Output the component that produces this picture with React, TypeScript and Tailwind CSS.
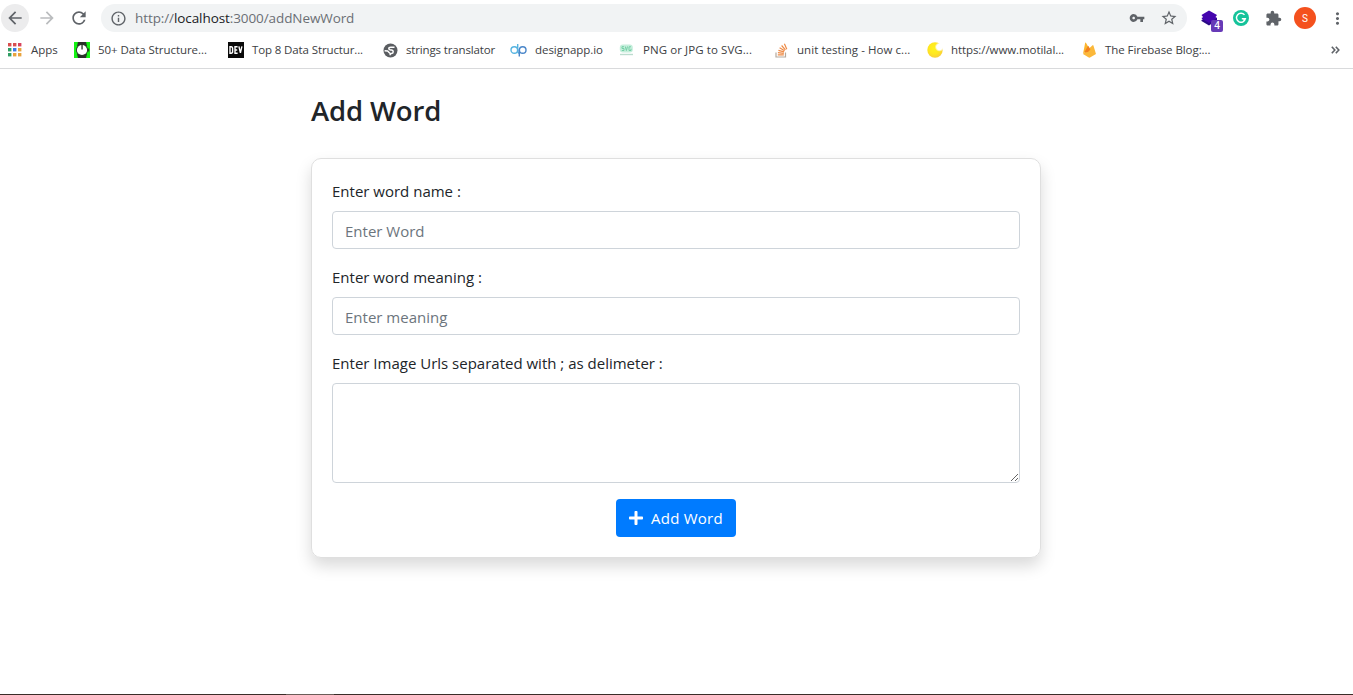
import type { ReactNode } from "react";
import { MdArrowBack, MdArrowForward, MdExtension, MdInfoOutline, MdMoreVert, MdRefresh, MdStarBorder, MdVpnKey } from "react-icons/md";
import { FaPlus } from "react-icons/fa";

const appColors = ["#d94f4f", "#d94f4f", "#d8445c", "#2f9e63", "#3b78e7", "#e8a33d", "#2f9e63", "#e8a33d", "#e8a33d"];

function AppsIcon() {
  return (
    <svg width="14" height="14" viewBox="0 0 14 14">
      {appColors.map((c, i) => (
        <rect key={i} x={(i % 3) * 5} y={Math.floor(i / 3) * 5} width="3.4" height="3.4" fill={c} />
      ))}
    </svg>
  );
}

function ClockIcon() {
  return (
    <svg width="16" height="16" viewBox="0 0 16 16">
      <rect width="16" height="16" fill="#12f312" />
      <path d="M4 0h8l1 4H3zM4 16h8l1-4H3z" fill="#2b2f2b" />
      <circle cx="8" cy="8" r="6" fill="#2b3a2b" />
      <circle cx="8" cy="8" r="5.100" fill="#fff" />
      <rect x="7.400" y="3" width="1.300" height="4.500" fill="#2b2f2b" />
      <rect x="14" y="6.500" width="1.200" height="3" fill="#2b3a2b" />
    </svg>
  );
}

function DevIcon() {
  return (
    <span className="flex h-4 w-4 items-center justify-center bg-[#0a0a0a]">
      <svg width="14" height="8" viewBox="0 0 14 8" fill="none" stroke="#fff" strokeWidth="1.400">
        <path d="M1 .8v6.400h1.200q1.400 0 1.400-1.400V2.200Q3.600.8 2.200.8zM8.600.8H6v6.400h2.600M6 4h2.200M9.900.3l1.500 6.500L12.900.3" />
      </svg>
    </span>
  );
}

function GlobeIcon() {
  return (
    <svg width="15" height="15" viewBox="0 0 15 15">
      <circle cx="7.500" cy="7.500" r="7" fill="#5a5d61" />
      <path d="M11.500 4.300H7.800Q5.800 4.300 5.800 5.600T7.600 7H8.600Q10.200 7.200 10.200 8.800T8.600 10.600H7.200V12.300M1.600 7.800 4.600 8 6.600 10" fill="none" stroke="#fff" strokeWidth="1.500" />
    </svg>
  );
}

function DpIcon() {
  return (
    <svg width="17" height="14" viewBox="0 0 17 14" fill="none" strokeWidth="1.400">
      <circle cx="4.300" cy="7" r="3.300" stroke="#56b4e0" />
      <path d="M7.700 1v6.500q0 2.800 1.800 2.800" stroke="#56b4e0" />
      <circle cx="12.700" cy="7" r="3.300" stroke="#4a86c9" />
      <path d="M9.300 6.500V13.500" stroke="#4a86c9" />
    </svg>
  );
}

function SvgFileIcon() {
  return (
    <svg width="15" height="12" viewBox="0 0 15 12" fill="none">
      <rect x=".8" y=".5" width="13" height="8" rx="3" fill="#c6eedc" />
      <path d="M5 2.700H3v1.800h2v2H2.800M6.300 2.500l1.100 4 1.100-4M12 2.800h-2v3.700h2V4.800" stroke="#74d0a6" />
      <path d="M1 10.500h13" stroke="#bcdccf" strokeWidth="1.400" />
    </svg>
  );
}

function StackIcon() {
  return (
    <svg width="13" height="15" viewBox="0 0 13 15" fill="none">
      <path d="M1 9.500v4.500h9.500V9.500" stroke="#b4a99d" strokeWidth="1.200" />
      <path d="M2.800 11.900h6M2.900 9.700l5.900.6M3.400 7.300l5.700 1.500M4.600 4.700l5 3M6.600 2.500l3.800 4.400M9.400.8l2.400 5.400" stroke="#ee8a45" strokeWidth="1.200" />
    </svg>
  );
}

function MoonIcon() {
  return (
    <svg width="16" height="16" viewBox="0 0 16 16">
      <defs>
        <radialGradient id="moon" cx=".45" cy=".4" r=".6">
          <stop offset="0" stopColor="#fff21f" />
          <stop offset=".6" stopColor="#ffe81f" />
          <stop offset="1" stopColor="#f9cf3a" />
        </radialGradient>
        <radialGradient id="shine">
          <stop offset=".6" stopColor="#fff" />
          <stop offset="1" stopColor="#fff" stopOpacity="0" />
        </radialGradient>
      </defs>
      <circle cx="8" cy="8" r="7.700" fill="url(#moon)" />
      <circle cx="12.500" cy="5" r="4.800" fill="url(#shine)" />
    </svg>
  );
}

function FirebaseIcon() {
  return (
    <svg width="13" height="16" viewBox="0 0 13 16">
      <path d="M0 12 2.200.8q.2-.7.700 0L6 6z" fill="#fbb52c" />
      <path d="M0 12 9.600 3.200q.6-.4.800.3L13 12 7 15.500q-.6.300-1.200 0z" fill="#fbb83a" />
      <path d="M1.200 10.500 4.800 4.200q.4-.6.800 0L7.400 7.600 5 10z" fill="#f2801e" />
    </svg>
  );
}

function StackedCubeIcon() {
  return (
    <svg width="17" height="17" viewBox="0 0 17 17">
      <path d="M.5 7.500 8 12l8-4.500V10L8 15.500.500 11V10L2 9.200z" fill="#2b0a86" />
      <path d="M8 .5 16 5 14.500 7 16 8.200 8 13 .5 8.500 2 7 .500 5z" fill="#4505ae" />
    </svg>
  );
}

function GrammarlyIcon() {
  return (
    <svg width="16" height="16" viewBox="0 0 16 16">
      <circle cx="8" cy="8" r="8" fill="#15c39a" />
      <path d="M11.500 4.900A4.500 4.500 0 1 0 12.400 8.700H8.800M10.600 10.500l1.800-1.800" fill="none" stroke="#fff" strokeWidth="1.400" />
    </svg>
  );
}

function Bookmark({ icon, label, className, iconBox }: { icon: ReactNode; label: string; className: string; iconBox: string }) {
  return (
    <div className={`flex h-5 shrink-0 items-center whitespace-nowrap text-[11.5px] text-[#3c4043] ${className}`}>
      <span className={`flex shrink-0 items-center ${iconBox}`}>{icon}</span>
      <span>{label}</span>
    </div>
  );
}

function Toolbar() {
  return (
    <div className="flex h-9 items-center text-[#5f6368]">
      <button className="ml-px flex h-7 w-7 items-center justify-center rounded-full bg-[#ececed]">
        <MdArrowBack size={20} />
      </button>
      <button className="ml-2 flex h-7 w-5 items-center justify-center text-[#babcbe]">
        <MdArrowForward size={20} />
      </button>
      <button className="ml-3 flex h-7 w-5 items-center justify-center">
        <MdRefresh size={20} />
      </button>
      <div className="ml-3 flex h-7 w-[1086px] items-center rounded-full bg-[#f1f3f4] px-[9px]">
        <MdInfoOutline size={17} />
        <span className="ml-2 flex-1 text-[13.5px] tracking-[-0.09px] text-[#6b6f74]">
          http://<span className="text-[#202124]">localhost</span>:3000/addNewWord
        </span>
        <MdVpnKey size={16} />
        <MdStarBorder size={18} className="ml-[15px]" />
      </div>
      <div className="relative ml-[14px] h-[17px] w-[17px]">
        <StackedCubeIcon />
        <span className="absolute top-[10px] left-[10px] flex h-3 w-3 items-center justify-center rounded-[2px] bg-[#673ab7] text-[10px] font-semibold text-white">4</span>
      </div>
      <div className="ml-[15px]"><GrammarlyIcon /></div>
      <MdExtension size={17} className="ml-4" />
      <div className="ml-3 flex h-[22px] w-[22px] items-center justify-center rounded-full bg-[#f4511e] font-['Roboto',sans-serif] text-[10px] text-white">S</div>
      <MdMoreVert size={19} className="ml-3" />
    </div>
  );
}

function BookmarksBar() {
  return (
    <div className="flex h-7 items-center">
      <Bookmark className="w-[66px] pl-2" iconBox="w-[23px]" icon={<AppsIcon />} label="Apps" />
      <Bookmark className="w-[154px] pl-2 tracking-[-0.05px]" iconBox="w-6" icon={<ClockIcon />} label="50+ Data Structure..." />
      <Bookmark className="w-[154px] pl-2 tracking-[-0.12px]" iconBox="w-6" icon={<DevIcon />} label="Top 8 Data Structur..." />
      <Bookmark className="w-[128px] pl-[9px] tracking-[-0.15px]" iconBox="w-[23px]" icon={<GlobeIcon />} label="strings translator" />
      <Bookmark className="w-[110px] pl-2 tracking-[-0.04px]" iconBox="w-[25px]" icon={<DpIcon />} label="designapp.io" />
      <Bookmark className="w-[154px] pl-[7px] tracking-[0.08px]" iconBox="w-6" icon={<SvgFileIcon />} label="PNG or JPG to SVG..." />
      <Bookmark className="w-[153px] pl-[9px] tracking-[0.06px]" iconBox="w-[22px]" icon={<StackIcon />} label="unit testing - How c..." />
      <Bookmark className="w-[155px] pl-2 tracking-[-0.08px]" iconBox="w-6" icon={<MoonIcon />} label="https://www.motilal..." />
      <Bookmark className="w-[140px] pl-[9px] tracking-[-0.06px]" iconBox="w-[22px]" icon={<FirebaseIcon />} label="The Firebase Blog:..." />
      <svg className="mr-[13px] ml-auto" width="9" height="8" viewBox="0 0 9 8" fill="none" stroke="#5f6368" strokeWidth="1.600">
        <path d="M.8.800 3.800 4l-3 3.200M4.800.800l3 3.200-3 3.200" />
      </svg>
    </div>
  );
}

const labelClass = "block h-6 text-[15px] leading-6 text-[#212529]";
const fieldClass = "mt-2 block w-full rounded-[4px] border border-[#ced4da] bg-white px-3 text-[15px] leading-6 text-[#495057] placeholder:text-[#6c757d]";

export default function App() {
  return (
    <div className="flex h-[695px] flex-col overflow-hidden bg-white font-['Open_Sans',sans-serif]">
      <header className="h-[69px] shrink-0 border-b border-[#d9dadc]">
        <Toolbar />
        <BookmarksBar />
      </header>
      <main className="ml-[311px] w-[730px] flex-1 pt-6">
        <h2 className="h-[34px] text-[27.5px] leading-[36px] font-semibold tracking-[-0.15px] text-[#212529]">Add Word</h2>
        <form className="mt-[31px] h-[400px] rounded-[10px] border border-[#dfdfdf] px-5 pt-5 shadow-[0_8px_16px_rgba(0,0,0,0.15)]">
          <label className={labelClass}>Enter word name :</label>
          <input className={`${fieldClass} h-[38px] pt-0.5`} placeholder="Enter Word" />
          <label className={`${labelClass} mt-4`}>Enter word meaning :</label>
          <input className={`${fieldClass} h-[38px] pt-0.5`} placeholder="Enter meaning" />
          <label className={`${labelClass} mt-4`}>Enter Image Urls separated with ; as delimeter :</label>
          <textarea className={`${fieldClass} h-[100px] resize py-1.5`} />
          <button type="button" className="mx-auto mt-4 flex h-[38px] w-[120px] items-center rounded-[4px] bg-[#007bff] pl-3 text-[15px] text-white">
            <FaPlus size={16} />
            <span className="ml-[7px] tracking-[0.25px]">Add Word</span>
          </button>
        </form>
      </main>
      <div className="flex h-px shrink-0 bg-[#3a2d28]">
        <div className="ml-[286px] h-px w-12 bg-[#6b5d58]" />
      </div>
    </div>
  );
}
